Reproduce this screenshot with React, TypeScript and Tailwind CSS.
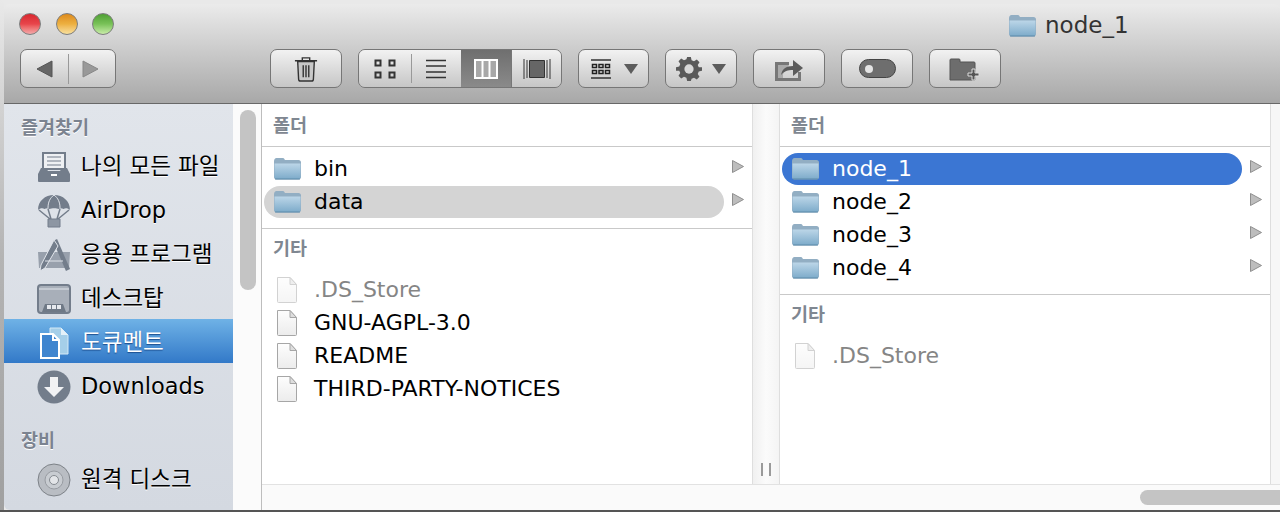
import type { ReactNode } from "react";

const FONT = "font-['DejaVu_Sans','Noto_Sans_CJK_KR',sans-serif]";

function Folder({ id, className }: { id: string; className: string }) {
  return (
    <svg viewBox="0 0 29 23" className={className}>
      <defs>
        <linearGradient id={id} x1="0" y1="0" x2="0" y2="1">
          <stop offset="0" stopColor="#bcd6e8" />
          <stop offset="1" stopColor="#7dabca" />
        </linearGradient>
      </defs>
      <path d="M1 4.500C1 2.500 2 1 3.500 1h6c1.200 0 1.800.6 2.400 2h13.600c1.600 0 2.500 1 2.500 2.500V20c0 1.500-1 2.500-2.500 2.500h-22C2 22.500 1 21.500 1 20Z" fill="#92aec3" />
      <path d="M1.500 6.500h26V20c0 1.200-.8 2-2 2h-22c-1.200 0-2-.8-2-2Z" fill={`url(#${id})`} />
      <path d="M2 22h25" stroke="#5c8aa9" strokeWidth="1" />
    </svg>
  );
}

function FileIcon({ faded }: { faded?: boolean }) {
  return (
    <svg viewBox="0 0 22 28" className={`h-[28px] w-[22px] ${faded ? "opacity-50" : ""}`}>
      <defs>
        <linearGradient id="file-fill" x1="0" y1="0" x2="0" y2="1">
          <stop offset="0" stopColor="#fdfdfd" />
          <stop offset="1" stopColor="#ececec" />
        </linearGradient>
      </defs>
      <path d="M1.500 1.500h12.500l6.500 7v17q0 1-1 1h-17q-1 0-1-1Z" fill="url(#file-fill)" stroke="#a6a6a6" />
      <path d="M14 1.500v7h6.500Z" fill="#dedede" stroke="#a6a6a6" />
    </svg>
  );
}

function Arrow() {
  return (
    <svg viewBox="0 0 12 13" className="h-[13px] w-[12px] shrink-0">
      <path d="M.5.500 11.500 6.500.5 12.500Z" fill="#bdbdbd" stroke="#8f8f8f" />
    </svg>
  );
}

function ColumnHead({ label, first }: { label: string; first?: boolean }) {
  return (
    <div
      className={`flex items-center pl-[11px] text-[18.5px] font-bold text-[#7f8791] ${
        first ? "h-[42px] pt-[2px]" : "h-[38px] pt-[1px]"
      }`}
    >
      {label}
    </div>
  );
}

function FolderRow({
  id,
  name,
  state,
}: {
  id: string;
  name: string;
  state?: "active" | "inactive";
}) {
  const pill =
    state === "active"
      ? "bg-[#3b76d3] text-white"
      : state === "inactive"
        ? "bg-[#d4d4d4] text-black"
        : "text-black";
  return (
    <div className="flex h-[33px] items-center pl-[2px]">
      <div className={`flex h-[32px] w-[460px] items-center rounded-full pl-[9px] text-[22px] ${pill}`}>
        <Folder id={id} className="h-[23px] w-[29px]" />
        <span className="ml-[12px]">{name}</span>
      </div>
      <div className="ml-[8px] -translate-y-[2px]">
        <Arrow />
      </div>
    </div>
  );
}

function FileRow({ name, faded }: { name: string; faded?: boolean }) {
  return (
    <div className={`flex h-[33px] items-center pl-[14px] text-[22px] ${faded ? "text-[#858585]" : "text-black"}`}>
      <FileIcon faded={faded} />
      <span className="ml-[16px]">{name}</span>
    </div>
  );
}

function ToolButton({ children, className = "w-[72px]" }: { children: ReactNode; className?: string }) {
  return (
    <div className={`flex h-[39px] items-center justify-center rounded-[7px] border border-[#767676] bg-gradient-to-b from-[#f2f2f2] to-[#c6c6c6] ${className}`}>
      {children}
    </div>
  );
}

function Caret() {
  return (
    <svg viewBox="0 0 14 10" className="h-[10px] w-[14px]">
      <path d="M0 0h14L7 10Z" fill="#5c5c5c" />
    </svg>
  );
}

function Light({ color }: { color: string }) {
  return <div className={`h-[22px] w-[22px] rounded-full border border-[#7d7d7d] bg-gradient-to-b ${color}`} />;
}

function SideHead({ label }: { label: string }) {
  return (
    <div className="flex h-[39px] items-center pt-[9px] pl-[17px] text-[18.5px] font-bold text-[#7b8390] [text-shadow:0_1px_0_#fff]">
      {label}
    </div>
  );
}

function SideRow({
  icon,
  label,
  active,
}: {
  icon: ReactNode;
  label: string;
  active?: boolean;
}) {
  return (
    <div
      className={`flex h-[44px] items-center pt-[4px] pl-[33px] text-[22.5px] ${
        active
          ? "bg-gradient-to-b from-[#6fb2e6] to-[#3279c8] text-white [text-shadow:0_1px_1px_#1d4f8f]"
          : "text-black [text-shadow:0_1px_0_#fff]"
      }`}
    >
      <div className="flex w-[34px] justify-center">{icon}</div>
      <span className="ml-[10px] whitespace-nowrap">{label}</span>
    </div>
  );
}

const sideGray = "#737d8b";

export default function App() {
  return (
    <div className={`flex h-[512px] w-[1280px] flex-col overflow-hidden bg-[#e9e9e9] ${FONT}`}>
      <div className="flex h-[510px]">
        <div className="w-[4px] shrink-0 bg-gradient-to-b from-[#e9e9e9] via-[#b4b4b4] to-[#a0a0a0]" />
        <div className="flex min-w-0 flex-1 flex-col pt-[4px]">
          {/* toolbar */}
          <div className="h-[100px] shrink-0 rounded-t-[6px] border-b border-[#686868] bg-gradient-to-b from-[#ebebeb] to-[#a8a8a8] pl-[16px]">
            <div className="flex h-[45px] items-center">
              <div className="-mt-[5px] -ml-px flex w-[121px] gap-[14.5px]">
                <Light color="from-[#d9262e] via-[#e8454b] to-[#f2a8ab]" />
                <Light color="from-[#dd8a1a] via-[#edb040] to-[#f8e09c]" />
                <Light color="from-[#4fa034] via-[#79c258] to-[#c8eca8]" />
              </div>
              <div className="-mt-[2px] ml-[868px] flex items-center">
                <Folder id="f-title" className="h-[23px] w-[29px]" />
                <span className="ml-[8px] text-[23px] text-[#333]">node_1</span>
              </div>
            </div>
            <div className="flex gap-[16px]">
              <ToolButton className="w-[96px]">
                <svg viewBox="0 0 66 32" className="h-[32px] w-[66px]">
                  <path d="M2 16 17 8v16Z" fill="#666" stroke="#555" />
                  <path d="M33.500 1v30" stroke="#999" strokeWidth="1" />
                  <path d="M63 16 48 8v16Z" fill="#999" stroke="#888" />
                </svg>
              </ToolButton>
              <ToolButton className="ml-[138px] w-[72px]">
                <svg viewBox="0 0 26 28" className="h-[26px] w-[24px]">
                  <path d="M1 5h24M9 5V2h8v3" stroke="#333" strokeWidth="1.500" fill="none" />
                  <path d="M4 6h18l-1 19q0 2-2 2H7q-2 0-2-2Z" fill="#c8c8c8" stroke="#333" strokeWidth="1.500" />
                  <path d="M10 10v13M13 10v13M16 10v13" stroke="#333" strokeWidth="1.500" />
                </svg>
              </ToolButton>
              <div className="flex h-[39px] w-[204px] overflow-hidden rounded-[7px] border border-[#767676]">
                <div className="flex w-[52px] items-center justify-center bg-gradient-to-b from-[#f2f2f2] to-[#c6c6c6]">
                  <svg viewBox="0 0 22 20" className="h-[20px] w-[22px]">
                    <path d="M1.500 1.500h5v5h-5ZM15.500 1.500h5v5h-5ZM1.500 13.500h5v5h-5ZM15.500 13.500h5v5h-5Z" fill="none" stroke="#333" strokeWidth="2" />
                  </svg>
                </div>
                <div className="w-[50px] bg-gradient-to-b from-[#f2f2f2] to-[#c6c6c6] py-[4px]">
                  <div className="flex h-full items-center justify-center border-l border-[#999] pr-[1px]">
                    <svg viewBox="0 0 22 20" className="h-[20px] w-[22px]">
                      <path d="M1 1.500h20M1 7h20M1 13h20M1 18.500h20" stroke="#333" strokeWidth="1.500" />
                    </svg>
                  </div>
                </div>
                <div className="flex w-[50px] items-center justify-center bg-gradient-to-b from-[#6f6f6f] to-[#8a8a8a]">
                  <svg viewBox="0 0 24 20" className="h-[20px] w-[24px]">
                    <path d="M1 1h22v18H1ZM8.500 1v18M15.500 1v18" fill="#a8a8a8" stroke="#fff" strokeWidth="2" />
                  </svg>
                </div>
                <div className="flex flex-1 items-center justify-center border-l border-[#777] bg-gradient-to-b from-[#f2f2f2] to-[#c6c6c6]">
                  <svg viewBox="0 0 28 20" className="h-[20px] w-[28px]">
                    <path d="M1 0v20M4 1v18M24 1v18M27 0v20" stroke="#333" />
                    <path d="M6.500 1.500h15v17h-15Z" fill="#666" stroke="#333" />
                  </svg>
                </div>
              </div>
              <ToolButton className="w-[71px]">
                <svg viewBox="0 0 22 20" className="h-[20px] w-[22px]">
                  <path d="M1 1h20M1 19h20" stroke="#333" strokeWidth="1.500" />
                  <path d="M2.500 5.500h4v3h-4ZM9 5.500h4v3H9ZM15.500 5.500h4v3h-4ZM2.500 11.500h4v3h-4ZM9 11.500h4v3H9ZM15.500 11.500h4v3h-4Z" fill="none" stroke="#222" strokeWidth="1.500" />
                </svg>
                <div className="ml-[12px]">
                  <Caret />
                </div>
              </ToolButton>
              <ToolButton>
                <svg viewBox="-1 -1 28 28" className="h-[26px] w-[26px]">
                  <path d="M11 0h4l.8 3.500 2.600 1.100 3-1.900 2.900 2.900-1.900 3 1.100 2.600L27 11v4l-3.500.8-1.100 2.600 1.900 3-2.900 2.900-3-1.900-2.600 1.100L15 26h-4l-.8-3.500-2.600-1.100-3 1.900-2.900-2.900 1.900-3-1.100-2.600L-1 15v-4l3.500-.8 1.100-2.600-1.900-3 2.900-2.900 3 1.900 2.600-1.100Z" fill="#5a5a5a" />
                  <circle cx="13" cy="13" r="5" fill="#d8d8d8" />
                </svg>
                <div className="ml-[10px]">
                  <Caret />
                </div>
              </ToolButton>
              <ToolButton>
                <svg viewBox="0 0 30 24" className="h-[24px] w-[30px]">
                  <path d="M1 5h14v3H4v13h20v-6h3v9H1Z" fill="#777" />
                  <path d="M4 8h11l-2 3-4 6v4H4Z" fill="#aaa" />
                  <path d="M7 18c1-6 5-9 12-9V3l10 8-10 8v-6c-5 0-9 1-12 5Z" fill="#5c5c5c" />
                </svg>
              </ToolButton>
              <ToolButton>
                <div className="flex h-[19px] w-[37px] items-center rounded-full border border-[#444] bg-[#6e6e6e] pl-[5px]">
                  <div className="h-[8px] w-[8px] rounded-full bg-[#e4e4e4]" />
                </div>
              </ToolButton>
              <ToolButton>
                <svg viewBox="0 0 32 24" className="h-[24px] w-[32px]">
                  <path d="M1 5V3q0-1 1-1h8q1 0 1 1v2h14q1 0 1 1v17H1Z" fill="#6d6d6d" stroke="#555" />
                  <path d="M23 12h3v4h4v3h-4v4h-3v-4h-4v-3h4Z" fill="#555" stroke="#ddd" strokeWidth="1" />
                </svg>
              </ToolButton>
            </div>
          </div>

          <div className="flex h-[406px] shrink-0">
            {/* sidebar */}
            <div className="w-[229px] shrink-0 rounded-bl-[6px] bg-gradient-to-b from-[#e1e5eb] to-[#d4d9e1]">
              <SideHead label="즐겨찾기" />
              <SideRow
                label="나의 모든 파일"
                icon={
                  <svg viewBox="0 0 32 30" className="h-[30px] w-[32px]">
                    <path d="M5 1h22v16H5Z" fill="#eef0f3" stroke={sideGray} strokeWidth="2" />
                    <path d="M9 5h14M9 9h14M9 13h14" stroke={sideGray} />
                    <path d="M3 16h5l2 3h12l2-3h5l3 6v7q0 1-1 1H1q-1 0-1-1v-7Z" fill={sideGray} />
                    <path d="M13 23h6" stroke="#fff" strokeWidth="2" />
                  </svg>
                }
              />
              <SideRow
                label="AirDrop"
                icon={
                  <svg viewBox="0 0 34 34" className="h-[34px] w-[34px]">
                    <path d="M1 16C1 7 8 1 17 1s16 6 16 15c-2-2-5-2-6.500-1-1.500-1-4-1-5 0-1.500-1-7-1-9 0-1-1-3.500-1-5 0C6 14 3 14 1 16Z" fill={sideGray} />
                    <path d="M11 14c0-6 2-10 6-13 4 3 6 7 6 13" fill="none" stroke="#e0e4ea" />
                    <path d="M2 16 13 25M32 16 21 25M11 15l3 10M23 15l-3 10" stroke={sideGray} strokeWidth="1.500" />
                    <path d="M11 25h12v8H11Z" fill="#8d96a3" stroke={sideGray} />
                  </svg>
                }
              />
              <SideRow
                label="응용 프로그램"
                icon={
                  <svg viewBox="0 0 34 34" className="h-[34px] w-[34px]">
                    <path d="M1 14h32l-1 16H2Z" fill="#98a0ac" />
                    <path d="M18 2 31 32" stroke={sideGray} strokeWidth="4.500" />
                    <path d="M17 2 4 27l-1 6 5-3L21 8Z" fill={sideGray} stroke="#e1e5eb" />
                    <path d="M8 23h18" stroke="#e1e5eb" />
                  </svg>
                }
              />
              <SideRow
                label="데스크탑"
                icon={
                  <svg viewBox="0 0 34 30" className="h-[30px] w-[34px]">
                    <rect x="1" y="1" width="32" height="28" rx="3" fill="#a8afb9" stroke={sideGray} strokeWidth="2" />
                    <path d="M2 5h30" stroke="#e1e5eb" />
                    <path d="M8 20h18l3 8H5Z" fill="#6f7986" />
                    <path d="M10 21h4v4h-4ZM15 21h4v4h-4ZM20 21h4v4h-4Z" fill="#e6e9ee" />
                  </svg>
                }
              />
              <SideRow
                active
                label="도큐멘트"
                icon={
                  <svg viewBox="0 0 30 32" className="h-[32px] w-[30px]">
                    <path d="M11 1h11l7 7v19H11Z" fill="#a5cfe9" stroke="#d4e9f6" />
                    <path d="M22 1v7h7" fill="#e4f1f9" />
                    <path d="M2 7h12l6 6v18H2Z" fill="#3f85cf" stroke="#fff" strokeWidth="2" />
                    <path d="M14 7v6h6" fill="none" stroke="#fff" strokeWidth="2" />
                  </svg>
                }
              />
              <SideRow
                label="Downloads"
                icon={
                  <svg viewBox="0 0 34 34" className="h-[34px] w-[34px]">
                    <circle cx="17" cy="17" r="16.500" fill={sideGray} />
                    <path d="M13 7h8v10h6L17 27 7 17h6Z" fill="#f1f2f4" />
                  </svg>
                }
              />
              <div className="h-[10px]" />
              <SideHead label="장비" />
              <SideRow
                label="원격 디스크"
                icon={
                  <svg viewBox="0 0 34 34" className="h-[34px] w-[34px]">
                    <circle cx="17" cy="17" r="16" fill="#b9bdc3" stroke="#7d8288" />
                    <circle cx="17" cy="17" r="9" fill="#c8ccd1" stroke="#989ca2" />
                    <circle cx="17" cy="17" r="4.500" fill="#e3e5e8" stroke="#858a90" />
                  </svg>
                }
              />
            </div>

            {/* sidebar scroll strip */}
            <div className="w-[28px] shrink-0 bg-[#fbfbfb] pt-[6px] pl-[7px]">
              <div className="h-[180px] w-[16px] rounded-full bg-[#c4c4c4]" />
            </div>

            <div className="flex min-w-0 flex-1 flex-col border-l border-[#bdbdbd]">
              <div className="flex h-[380px] shrink-0">
                {/* first column */}
                <div className="w-[490px] shrink-0 bg-white">
                  <ColumnHead first label="폴더" />
                  <div className="border-y border-[#c9c9c9] pt-[5px] pb-[10px]">
                    <FolderRow id="f-bin" name="bin" />
                    <FolderRow id="f-data" name="data" state="inactive" />
                  </div>
                  <ColumnHead label="기타" />
                  <div className="mt-[6px]">
                    <FileRow name=".DS_Store" faded />
                    <FileRow name="GNU-AGPL-3.0" />
                    <FileRow name="README" />
                    <FileRow name="THIRD-PARTY-NOTICES" />
                  </div>
                </div>
                {/* resize gutter */}
                <div className="flex w-[28px] shrink-0 items-end justify-center gap-[6px] border-x border-[#dedede] bg-gradient-to-r from-[#f0f0f0] via-[#fbfbfb] to-[#f4f4f4] pb-[8px]">
                  <div className="h-[13px] w-[2px] bg-[#9a9a9a]" />
                  <div className="h-[13px] w-[2px] bg-[#9a9a9a]" />
                </div>
                {/* second column */}
                <div className="w-[490px] shrink-0 bg-white">
                  <ColumnHead first label="폴더" />
                  <div className="border-y border-[#c9c9c9] pt-[5px] pb-[10px]">
                    <FolderRow id="f-n1" name="node_1" state="active" />
                    <FolderRow id="f-n2" name="node_2" />
                    <FolderRow id="f-n3" name="node_3" />
                    <FolderRow id="f-n4" name="node_4" />
                  </div>
                  <ColumnHead label="기타" />
                  <div className="mt-[6px]">
                    <FileRow name=".DS_Store" faded />
                  </div>
                </div>
                <div className="flex-1 border-l border-[#dedede] bg-[#f7f7f7]" />
              </div>
              {/* horizontal scroll */}
              <div className="flex h-[26px] shrink-0 justify-end border-t border-[#e2e2e2] bg-[#fafafa] pt-[5px]">
                <div className="h-[15px] w-[140px] rounded-l-full bg-[#c4c4c4]" />
              </div>
            </div>
          </div>
        </div>
      </div>
      <div className="h-[2px] shrink-0 bg-[#555]" />
    </div>
  );
}
